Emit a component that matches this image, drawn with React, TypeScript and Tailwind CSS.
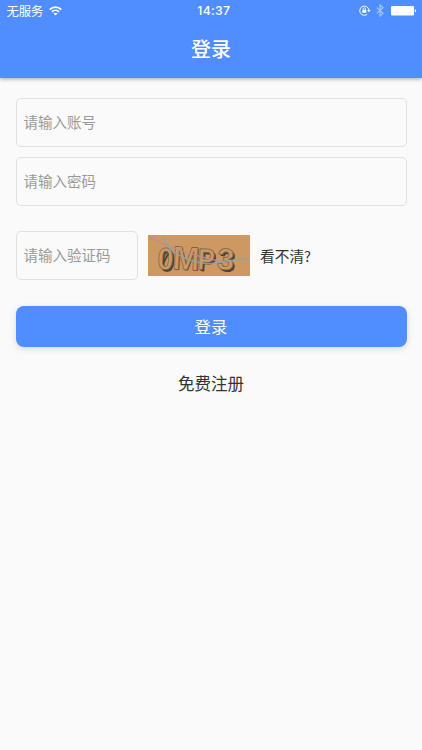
import React from "react";

function Wifi() {
  return (
    <svg width="13" height="10" viewBox="0 0 13 10" fill="none" stroke="white" strokeWidth="1.7">
      <path d="M0.7 3.6C4 .3 9 .3 12.3 3.6" />
      <path d="M2.9 5.9C5 3.9 8 3.9 10.1 5.9" />
      <path d="M6.5 9.6 4.4 7.5Q6.5 5.9 8.6 7.5Z" fill="white" stroke="none" />
    </svg>
  );
}

function RotationLock() {
  return (
    <svg width="12" height="11" viewBox="0 0 12 11" fill="none" stroke="white">
      <path d="M8.2 9.3A4.6 4.6 0 1 1 9.9 5" strokeWidth="0.95" />
      <path d="M8.1 4.9h3.6L9.9 7.2Z" fill="white" stroke="none" />
      <rect x="3.3" y="4.8" width="4" height="3" fill="white" stroke="none" />
      <path d="M4.1 5V4a1.2 1.2 0 0 1 2.4 0v1" strokeWidth="0.8" />
    </svg>
  );
}

function Bluetooth() {
  return (
    <svg width="8" height="13" viewBox="0 0 8 13" fill="none" stroke="#a9c8ff" strokeWidth="1.1">
      <path d="M.7 3.6 7 9.3 4 12V1l3 2.7L.7 9.4" />
    </svg>
  );
}

function Battery() {
  return (
    <svg width="26" height="10" viewBox="0 0 26 10" fill="white">
      <rect width="23" height="9.6" rx="1.3" />
      <path d="M23.8 3.2q1.4.3 1.4 1.6t-1.4 1.6Z" />
    </svg>
  );
}

const glyphs = [
  { c: "0", x: 9, w: 16, r: 3, size: 31, shade: 1.8, slash: true },
  { c: "M", x: 24, w: 27, r: 3, size: 33, shade: 0.8, slash: false },
  { c: "P", x: 49, w: 17, r: 4, size: 30, shade: 1.9, slash: false },
  { c: "3", x: 68.5, w: 17, r: 4, size: 30, shade: 1.9, slash: false },
];

function Captcha() {
  return (
    <svg width="102" height="41" viewBox="0 0 102 41" className="overflow-visible bg-[#cd9861]">
      <g fontFamily="Liberation Sans, sans-serif" fontWeight="700">
        {glyphs.map((g) => (
          <g key={g.c} transform={`translate(${g.x} 34) rotate(${g.r})`} fontSize={g.size}>
            <text x={g.shade} y={g.shade} fill="#4a4335" textLength={g.w} lengthAdjust="spacingAndGlyphs">{g.c}</text>
            <text fill="#cd9861" stroke="#74664f" strokeWidth="0.7" textLength={g.w} lengthAdjust="spacingAndGlyphs">{g.c}</text>
            {g.slash && <path d="M6-6 10.5-16" stroke="#4a4335" strokeWidth="1.8" />}
          </g>
        ))}
      </g>
      <g fill="none" strokeWidth="1.4">
        <path d="M3 3C20 12 40 20 80 28" stroke="#b88ba4" opacity=".85" />
        <path d="M15 2C20 16 31 22 49 27S75 24 101 24" stroke="#8ba6ad" opacity=".85" />
      </g>
    </svg>
  );
}

function Field({ label, type = "text" }: { label: string; type?: string }) {
  return (
    <input
      type={type}
      placeholder={label}
      className="block h-[49px] w-full rounded-[5px] border border-[#e0e0e0] bg-transparent px-[7px] pb-[2px] text-[14.5px] text-[#333] placeholder:text-[#999] placeholder:opacity-100 outline-none"
    />
  );
}

export default function App() {
  return (
    <div className="h-[750px] w-[422px] overflow-hidden bg-[#fafafa] font-['Noto_Sans_CJK_SC',sans-serif] text-[#333]">
      <header className="h-[78px] bg-[#508dff] text-white shadow-[0_1px_4px_rgba(0,0,0,0.35)]">
        <div className="grid h-[21px] grid-cols-3 items-center pl-[6.5px] pr-[5px]">
          <div className="flex items-center gap-[6px] text-[12.3px] leading-[20px]">
            <span>无服务</span>
            <Wifi />
          </div>
          <time className="pl-[4px] pt-px text-center font-['Inter',sans-serif] text-[12.2px] font-medium tracking-[0.3px]">14:37</time>
          <div className="flex items-center justify-end">
            <RotationLock />
            <span className="ml-[5px] mr-[7px]"><Bluetooth /></span>
            <Battery />
          </div>
        </div>
        <h1 className="pt-[13px] text-center text-[20px] font-medium leading-[30px]">登录</h1>
      </header>
      <main className="px-[15.5px] pt-[20px]">
        <div className="flex flex-col gap-[10px]">
          <Field label="请输入账号" />
          <Field label="请输入密码" type="password" />
        </div>
        <div className="mt-[25px] flex items-center">
          <div className="w-[122px]"><Field label="请输入验证码" /></div>
          <div className="ml-[10.5px]"><Captcha /></div>
          <button className="ml-[10px] text-[14.7px] leading-5">看不清?</button>
        </div>
        <button className="mt-[26px] block h-[41px] w-full rounded-[8px] bg-[#508dff] text-[16.4px] text-white shadow-[0_2px_7px_rgba(0,0,0,0.13)]">登录</button>
        <button className="mx-auto mt-[24px] block text-[16.5px] leading-6">免费注册</button>
      </main>
    </div>
  );
}
